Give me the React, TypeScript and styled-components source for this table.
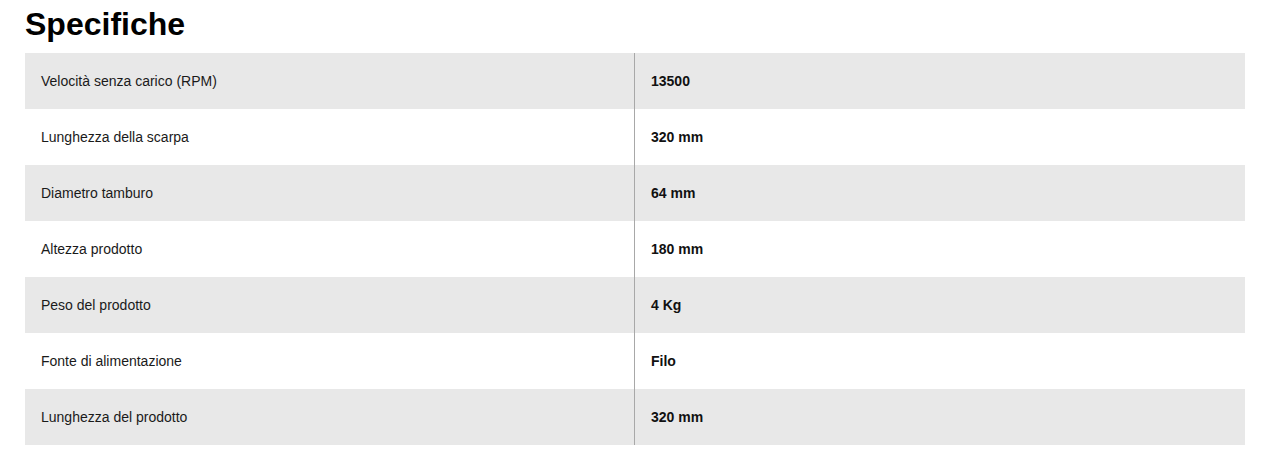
import React from 'react'
import styled, { createGlobalStyle } from 'styled-components'

const GlobalStyle = createGlobalStyle`
  body {
    margin: 0;
    background: #fff;
    font-family: 'Liberation Sans', Arial, sans-serif;
    color: #111;
  }
`

const Container = styled.div`
  padding: 0 23px 0 25px;
`

const Title = styled.h2`
  margin: 6px 0 10px;
  font-size: 32px;
  line-height: 37px;
  font-weight: bold;
  color: #000;
`

const Table = styled.div`
  display: flex;
  flex-direction: column;
`

const Row = styled.div<{ $shaded: boolean }>`
  display: grid;
  grid-template-columns: 610px 1fr;
  height: 56px;
  background: ${(p) => (p.$shaded ? '#e8e8e8' : '#fff')};
`

const Label = styled.div`
  display: flex;
  align-items: center;
  padding: 0 16px;
  font-size: 14px;
  color: #1a1a1a;
  border-right: 1px solid #a8a8a8;
`

const Value = styled.div`
  display: flex;
  align-items: center;
  padding: 0 16px;
  font-size: 14px;
  font-weight: bold;
  color: #111;
`

const specs = [
  ['Velocità senza carico (RPM)', '13500'],
  ['Lunghezza della scarpa', '320 mm'],
  ['Diametro tamburo', '64 mm'],
  ['Altezza prodotto', '180 mm'],
  ['Peso del prodotto', '4 Kg'],
  ['Fonte di alimentazione', 'Filo'],
  ['Lunghezza del prodotto', '320 mm']
]

const App: React.FC = () => {
  return (
    <Container>
      <GlobalStyle />
      <Title>Specifiche</Title>
      <Table>
        {specs.map(([label, value], i) => (
          <Row key={label} $shaded={i % 2 === 0}>
            <Label>{label}</Label>
            <Value>{value}</Value>
          </Row>
        ))}
      </Table>
    </Container>
  )
}

export default App
